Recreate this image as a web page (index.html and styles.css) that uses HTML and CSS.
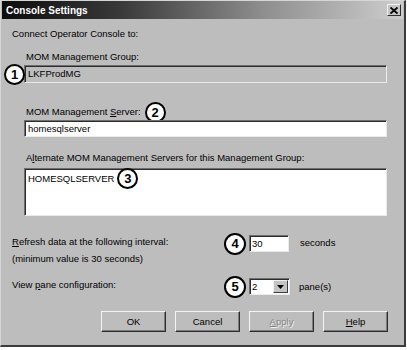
FILE: index.html
```html
<!DOCTYPE html>
<html>
<head>
<meta charset="utf-8">
<link rel="stylesheet" href="styles.css">
</head>
<body>
<div class="dialog">
  <div class="titlebar">
    <span class="title">Console Settings</span>
    <span class="close">
      <svg width="8" height="7" viewBox="0 0 8 7"><path d="M0.5 0.5 L7.5 6.5 M7.5 0.5 L0.5 6.5" stroke="#000" stroke-width="1.8"/></svg>
    </span>
  </div>
  <div class="content">
    <div class="lbl intro"><span>Connect Operator Console to:</span></div>
    <div class="indent">
      <div class="lbl l-group"><span>MOM Management Group:</span></div>
      <div class="field ro">LKFProdMG</div>
      <div class="lbl l-server"><span>MOM Management <u>S</u>erver:</span><span class="callout c2">2</span></div>
      <div class="field edit">homesqlserver</div>
      <div class="lbl l-alt"><span>A<u>l</u>ternate MOM Management Servers for this Management Group:</span></div>
      <div class="field area"><div class="line"><span>HOMESQLSERVER</span><span class="callout c3">3</span></div></div>
    </div>
    <div class="row refresh">
      <div class="lbls">
        <div class="lbl"><span><u>R</u>efresh data at the following interval:</span></div>
        <div class="lbl"><span>(minimum value is 30 seconds)</span></div>
      </div>
      <div class="ctrl">
        <span class="callout">4</span>
        <span class="field num">30</span>
        <span class="unit">seconds</span>
      </div>
    </div>
    <div class="row view">
      <div class="lbls">
        <div class="lbl"><span>View <u>p</u>ane configuration:</span></div>
      </div>
      <div class="ctrl">
        <span class="callout">5</span>
        <span class="field combo"><span class="val">2</span><span class="drop"><svg width="7" height="4" viewBox="0 0 7 4"><path d="M0 0 H7 L3.5 4 Z" fill="#000"/></svg></span></span>
        <span class="unit">pane(s)</span>
      </div>
    </div>
    <div class="buttons">
      <span class="btn"><span>OK</span></span>
      <span class="btn"><span>Cancel</span></span>
      <span class="btn disabled"><span><u>A</u>pply</span></span>
      <span class="btn"><span><u>H</u>elp</span></span>
    </div>
  </div>
  <span class="callout c1">1</span>
</div>
</body>
</html>
```

FILE: styles.css
```css
html, body {
  margin: 0;
  padding: 0;
  background: #ffffff;
}

.dialog {
  position: relative;
  box-sizing: border-box;
  width: 406px;
  height: 347px;
  background: #bdbdbd;
  border-top: 1px solid #d6d6d6;
  border-left: 1px solid #d6d6d6;
  border-right: 2px solid #3c3c3c;
  border-bottom: 2px solid #3c3c3c;
  font-family: "Liberation Sans", Arial, sans-serif;
  font-size: 9.5px;
  color: #000;
}

.titlebar {
  height: 18px;
  margin: 0 1px;
  display: flex;
  align-items: center;
  justify-content: space-between;
  background: linear-gradient(to right, #0c0c0c 0%, #3a3a3a 30%, #8e8e8e 65%, #cdcdcd 100%);
}

.title {
  color: #fff;
  font-weight: bold;
  font-size: 10px;
  padding-left: 4px;
}

.close {
  width: 14px;
  height: 12px;
  margin-right: 2px;
  box-sizing: border-box;
  background: #c4c4c4;
  border-top: 1px solid #f2f2f2;
  border-left: 1px solid #f2f2f2;
  border-right: 1px solid #303030;
  border-bottom: 1px solid #303030;
  display: flex;
  align-items: center;
  justify-content: center;
}

.content {
  display: flex;
  flex-direction: column;
  padding: 0 16px 0 11px;
}

.lbl {
  height: 12px;
  line-height: 12px;
  display: flex;
  align-items: center;
  white-space: nowrap;
}

.intro { margin-top: 9px; }

.indent {
  display: flex;
  flex-direction: column;
  padding-left: 12px;
  padding-right: 1px;
}

.indent .lbl { padding-left: 2px; }

.l-group { margin-top: 11px; }
.l-server { margin-top: 23px; }
.l-alt { margin-top: 15px; }

.field {
  box-sizing: border-box;
  background: #fff;
  border-top: 1px solid #6e6e6e;
  border-left: 1px solid #6e6e6e;
  border-right: 1px solid #eaeaea;
  border-bottom: 1px solid #eaeaea;
  box-shadow: inset 1px 1px 0 #2c2c2c;
  padding-left: 3px;
  line-height: 15px;
  white-space: nowrap;
}

.ro {
  margin-top: 2px;
  height: 18px;
  line-height: 16px;
  background: #bdbdbd;
}

.edit {
  margin-top: 2px;
  height: 17px;
}

.area {
  margin-top: 4px;
  height: 48px;
  padding-top: 3px;
}

.area .line {
  height: 12px;
  display: flex;
  align-items: center;
}

.callout {
  box-sizing: border-box;
  width: 21px;
  height: 21px;
  flex-shrink: 0;
  border: 2px solid #000;
  border-radius: 50%;
  background: #fff;
  color: #000;
  font-weight: bold;
  font-size: 13px;
  line-height: 17px;
  text-align: center;
}

.c1 {
  position: absolute;
  left: 3px;
  top: 63px;
}

.c2 { margin-left: 4px; }
.c3 { margin-left: 3px; }

.row {
  display: flex;
  align-items: flex-start;
}

.lbls {
  width: 212px;
  display: flex;
  flex-direction: column;
  gap: 5px;
}

.refresh { margin-top: 20px; }
.view { margin-top: 14px; }

.ctrl {
  display: flex;
  align-items: center;
  height: 17px;
  margin-top: -1px;
}

.ctrl .callout {
  width: 22px;
  height: 22px;
  line-height: 18px;
}

.num {
  width: 40px;
  height: 17px;
  margin-left: 3px;
  padding-left: 2px;
}

.combo {
  width: 41px;
  height: 17px;
  margin-left: 3px;
  padding-left: 2px;
  display: flex;
  align-items: center;
  justify-content: space-between;
}

.drop {
  box-sizing: border-box;
  width: 15px;
  height: 13px;
  margin-right: 1px;
  background: #c4c4c4;
  border-top: 1px solid #f0f0f0;
  border-left: 1px solid #f0f0f0;
  border-right: 1px solid #3a3a3a;
  border-bottom: 1px solid #3a3a3a;
  display: flex;
  align-items: center;
  justify-content: center;
}

.refresh .unit { margin-left: 11px; margin-top: -2px; }
.view .unit { margin-left: 9px; }

.buttons {
  display: flex;
  justify-content: flex-end;
  gap: 9px;
  margin-top: 16px;
}

.btn {
  box-sizing: border-box;
  width: 65px;
  height: 21px;
  background: #bdbdbd;
  border-top: 1px solid #f4f4f4;
  border-left: 1px solid #f4f4f4;
  border-right: 1px solid #2e2e2e;
  border-bottom: 1px solid #2e2e2e;
  box-shadow: inset -1px -1px 0 #7c7c7c;
  display: flex;
  align-items: center;
  justify-content: center;
}

.btn.disabled {
  color: #868686;
  text-shadow: 1px 1px 0 #ededed;
}
```
